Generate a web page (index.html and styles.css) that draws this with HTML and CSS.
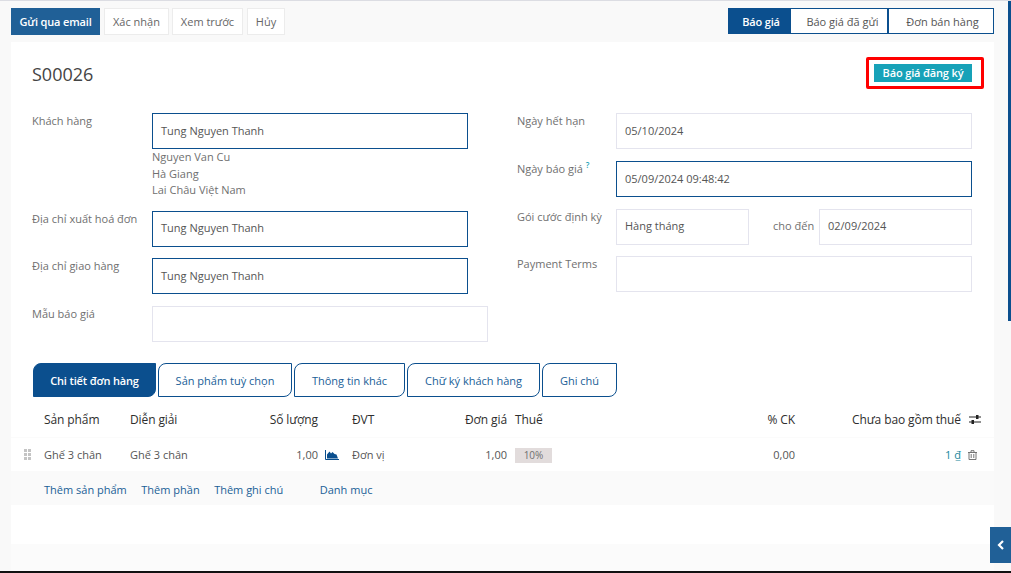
FILE: index.html
```html
<!DOCTYPE html>
<html lang="vi">

<head>
    <meta charset="UTF-8">
    <meta name="viewport" content="width=device-width, initial-scale=1.0">
    <title>S00026</title>
    <link rel="stylesheet" href="styles.css">
</head>

<body>
    <div class="page">
        <div class="scroll-thumb"></div>
        <div class="control">
            <div class="actions">
                <button class="btn btn-primary">Gửi qua email</button>
                <button class="btn btn-confirm">Xác nhận</button>
                <button class="btn btn-preview">Xem trước</button>
                <button class="btn btn-cancel">Hủy</button>
            </div>
            <div class="status">
                <span class="step step-active">Báo giá</span>
                <span class="step step-sent">Báo giá đã gửi</span>
                <span class="step step-order">Đơn bán hàng</span>
            </div>
        </div>

        <div class="sheet">
            <div class="head">
                <h1 class="title">S00026</h1>
                <span class="badge">Báo giá đăng ký</span>
                <div class="highlight"></div>
            </div>

            <div class="form">
                <div class="col col-left">
                    <div class="group">
                        <label class="label">Khách hàng</label>
                        <div class="input input-focus">Tung Nguyen Thanh</div>
                    </div>
                    <div class="address">Nguyen Van Cu<br>Hà Giang<br>Lai Châu Việt Nam</div>
                    <div class="group group-bill">
                        <label class="label">Địa chỉ xuất hoá đơn</label>
                        <div class="input input-focus input-tight">Tung Nguyen Thanh</div>
                    </div>
                    <div class="group group-ship">
                        <label class="label">Địa chỉ giao hàng</label>
                        <div class="input input-focus">Tung Nguyen Thanh</div>
                    </div>
                    <div class="group group-tpl">
                        <label class="label">Mẫu báo giá</label>
                        <div class="input input-wide"></div>
                    </div>
                </div>
                <div class="col col-right">
                    <div class="group">
                        <label class="label label-r">Ngày hết hạn</label>
                        <div class="input input-r">05/10/2024</div>
                    </div>
                    <div class="group group-next">
                        <label class="label label-r">Ngày báo giá <sup class="help">?</sup></label>
                        <div class="input input-r input-focus">05/09/2024 09:48:42</div>
                    </div>
                    <div class="group group-next">
                        <label class="label label-r">Gói cước định kỳ</label>
                        <div class="input input-plan input-tight">Hàng tháng</div>
                        <span class="until">cho đến</span>
                        <div class="input input-until input-tight">02/09/2024</div>
                    </div>
                    <div class="group group-terms">
                        <label class="label label-r">Payment Terms</label>
                        <div class="input input-r"></div>
                    </div>
                </div>
            </div>

            <div class="tabs">
                <a class="tab tab-active">Chi tiết đơn hàng</a>
                <a class="tab tab-options">Sản phẩm tuỳ chọn</a>
                <a class="tab tab-info">Thông tin khác</a>
                <a class="tab tab-sign">Chữ ký khách hàng</a>
                <a class="tab tab-note">Ghi chú</a>
            </div>

            <div class="row row-head">
                <span></span>
                <span>Sản phẩm</span>
                <span>Diễn giải</span>
                <span class="num">Số lượng</span>
                <span></span>
                <span>ĐVT</span>
                <span class="num">Đơn giá</span>
                <span>Thuế</span>
                <span class="num">% CK</span>
                <span class="num">Chưa bao gồm thuế</span>
                <span class="tool tool-head">
                    <svg width="12" height="11" viewBox="0 0 12 11">
                        <path d="M0 3h12M0 8h12" stroke="#222" stroke-width="1.2" />
                        <rect x="7" y="1" width="2.5" height="4" fill="#222" />
                        <rect x="2.5" y="6" width="2.5" height="4" fill="#222" />
                    </svg>
                </span>
            </div>

            <div class="row row-line">
                <span class="grip">
                    <svg width="7" height="11" viewBox="0 0 7 11" fill="#c4c4c4">
                        <rect x="0" y="0" width="3" height="3" />
                        <rect x="4" y="0" width="3" height="3" />
                        <rect x="0" y="4" width="3" height="3" />
                        <rect x="4" y="4" width="3" height="3" />
                        <rect x="0" y="8" width="3" height="3" />
                        <rect x="4" y="8" width="3" height="3" />
                    </svg>
                </span>
                <span>Ghế 3 chân</span>
                <span>Ghế 3 chân</span>
                <span class="num">1,00</span>
                <span class="chart">
                    <svg width="14" height="11" viewBox="0 0 14 11">
                        <path d="M0.500 1v9.500H14" fill="none" stroke="#0b4f8e" />
                        <path d="M2 9.500V5.500L4.500 2.500 6 4.500 7.500 3 9.500 5l2 .5 1.500 4z" fill="#0b4f8e" />
                    </svg>
                </span>
                <span>Đơn vị</span>
                <span class="num">1,00</span>
                <span><span class="tag">10%</span></span>
                <span class="num">0,00</span>
                <span class="num total">1 <u>₫</u></span>
                <span class="tool">
                    <svg width="9" height="10" viewBox="0 0 9 10" fill="none" stroke="#666" stroke-width="0.9">
                        <path d="M0 2.500h9M3 2.500V0.700h3v1.800M1 2.500v7h7v-7M3.200 4v4M5.800 4v4" />
                    </svg>
                </span>
            </div>

            <div class="adds">
                <a>Thêm sản phẩm</a>
                <a>Thêm phần</a>
                <a>Thêm ghi chú</a>
                <a class="add-cat">Danh mục</a>
            </div>
            <div class="blank"></div>
            <div class="footer-band"></div>
        </div>

        <div class="expand">
            <svg width="8" height="10" viewBox="0 0 8 10">
                <path d="M6 1L2 5l4 4" fill="none" stroke="#fff" stroke-width="2.200" />
            </svg>
        </div>
    </div>
</body>

</html>
```

FILE: styles.css
```css
* {
    box-sizing: border-box;
}

html,
body {
    margin: 0;
    padding: 0;
    height: 100%;
    overflow: hidden;
}

body {
    font-family: "Open Sans", "Noto Sans", sans-serif;
    font-size: 11px;
    color: #555555;
}

.page {
    position: relative;
    width: 1011px;
    height: 573px;
    display: flex;
    flex-direction: column;
    background-color: #f9f9f9;
    border-top: 1px solid #dcdde3;
    border-bottom: 2px solid #111111;
}

.scroll-thumb {
    position: absolute;
    right: 0;
    top: 0;
    width: 3px;
    height: 320px;
    background-color: #0b4f8e;
}

/* thanh nut tren cung */
.control {
    display: flex;
    justify-content: space-between;
    height: 41px;
    padding: 7px 17px 0 11px;
}

.actions {
    display: flex;
    gap: 3px;
}

.btn {
    height: 27px;
    padding: 0;
    font: inherit;
    color: #666666;
    background-color: #ffffff;
    border: 1px solid #ececec;
}

.btn-primary {
    width: 89px;
    margin-right: 1px;
    color: #ffffff;
    font-weight: 600;
    letter-spacing: -0.150px;
    background-color: #206097;
    border-color: #206097;
}

.btn-confirm {
    width: 65px;
}

.btn-preview {
    width: 71px;
    margin-right: 1px;
}

.btn-cancel {
    width: 38px;
}

.status {
    display: flex;
    height: 26px;
}

.step {
    display: flex;
    align-items: center;
    justify-content: center;
    color: #555555;
    background-color: #ffffff;
    border: 1px solid #0b4f8e;
}

.step-active {
    width: 63px;
    padding-left: 3px;
    color: #ffffff;
    font-weight: 600;
    letter-spacing: -0.150px;
    background-color: #0b4f8e;
}

.step-sent {
    width: 97px;
    border-left: 0;
    padding-left: 7px;
}

.step-order {
    width: 106px;
    border-left: 1px solid #0b4f8e;
    padding-left: 3px;
}

/* phieu */
.sheet {
    flex: 1;
    margin: 0 17px 0 11px;
    display: flex;
    flex-direction: column;
    background-color: #ffffff;
}

.head {
    position: relative;
    height: 71px;
    padding: 20px 22px 0 21px;
    display: flex;
    justify-content: space-between;
    align-items: flex-start;
}

.title {
    margin: 0;
    font-size: 18px;
    font-weight: 400;
    line-height: 25px;
    color: #444444;
}

.badge {
    height: 18px;
    width: 98px;
    margin-top: 2px;
    flex: none;
    font-weight: 600;
    letter-spacing: -0.150px;
    line-height: 18px;
    text-align: center;
    color: #ffffff;
    background-color: #17a2b8;
}

/* khung do ve them tren anh */
.highlight {
    position: absolute;
    left: 855px;
    top: 15px;
    width: 118px;
    height: 32px;
    border: 3px solid #ff0000;
    border-radius: 2px;
}

.form {
    display: flex;
    height: 250px;
    padding-left: 21px;
}

.col-left {
    width: 485px;
}

.group {
    display: flex;
    align-items: flex-start;
}

.label {
    width: 120px;
    flex: none;
    line-height: 16px;
    color: #707070;
}

.label-r {
    width: 99px;
}

.help {
    font-size: 8px;
    font-weight: 600;
    line-height: 0;
    color: #17a2b8;
}

.input {
    width: 316px;
    height: 36px;
    padding: 0 8px;
    line-height: 34px;
    color: #555555;
    border: 1px solid #e4e4ee;
}

.input-tight {
    line-height: 32px;
}

.input-focus {
    border-color: #0b4f8e;
}

.input-wide {
    width: 336px;
}

.input-r {
    width: 356px;
}

.input-plan {
    width: 133px;
}

.until {
    width: 70px;
    padding-left: 24px;
    line-height: 34px;
    color: #707070;
}

.input-until {
    width: 153px;
}

.address {
    margin: 0 0 0 120px;
    height: 62px;
    line-height: 16.500px;
    color: #707070;
}

.group-ship {
    margin-top: 11px;
}

.group-tpl {
    margin-top: 12px;
}

.group-next {
    margin-top: 12px;
}

.group-terms {
    margin-top: 11px;
}

/* tab */
.tabs {
    display: flex;
    gap: 2px;
    padding-left: 22px;
    height: 34px;
}

.tab {
    display: flex;
    align-items: center;
    justify-content: center;
    color: #206097;
    border: 1px solid #0b4f8e;
    border-radius: 8px 0 8px 0;
}

.tab-active {
    width: 123px;
    color: #ffffff;
    font-weight: 600;
    letter-spacing: -0.150px;
    background-color: #0b4f8e;
}

.tab-options {
    width: 134px;
}

.tab-info {
    width: 111px;
}

.tab-sign {
    width: 133px;
}

.tab-note {
    width: 75px;
}

/* bang */
.row {
    display: grid;
    grid-template-columns: 33px 86px 100px 88px 34px 90px 65px 208px 80px 166px 33px;
    align-items: center;
}

.row > :nth-child(8) {
    padding-left: 8px;
}

.row-head {
    height: 41px;
    padding-top: 5px;
    color: #2e2e2e;
    font-size: 12px;
    font-weight: 400;
    letter-spacing: -0.100px;
    border-bottom: 1px solid #fbfbfb;
}

.row-line {
    height: 33px;
    color: #555555;
}

.num {
    text-align: right;
}

.grip {
    display: flex;
    justify-content: flex-end;
    padding-right: 13px;
}

.chart {
    display: flex;
    padding-left: 7px;
}

.tag {
    display: inline-block;
    width: 37px;
    height: 15px;
    line-height: 15px;
    font-size: 10px;
    text-align: center;
    color: #707070;
    background-color: #e2dcdc;
}

.total {
    color: #17879c;
}

.tool {
    display: flex;
    justify-content: center;
    padding-right: 11px;
}

.tool-head {
    padding-right: 5px;
}

.adds {
    display: flex;
    align-items: center;
    gap: 14.500px;
    height: 34px;
    padding-top: 2px;
    padding-left: 33px;
    background-color: #fafafa;
    color: #206097;
}

.add-cat {
    margin-left: 22px;
}

.blank {
    height: 39px;
}

.footer-band {
    flex: 1;
    background-color: #fbfbfb;
}

.expand {
    position: absolute;
    right: 0;
    top: 526px;
    width: 21px;
    height: 36px;
    display: flex;
    align-items: center;
    justify-content: center;
    background-color: #206097;
}
```
